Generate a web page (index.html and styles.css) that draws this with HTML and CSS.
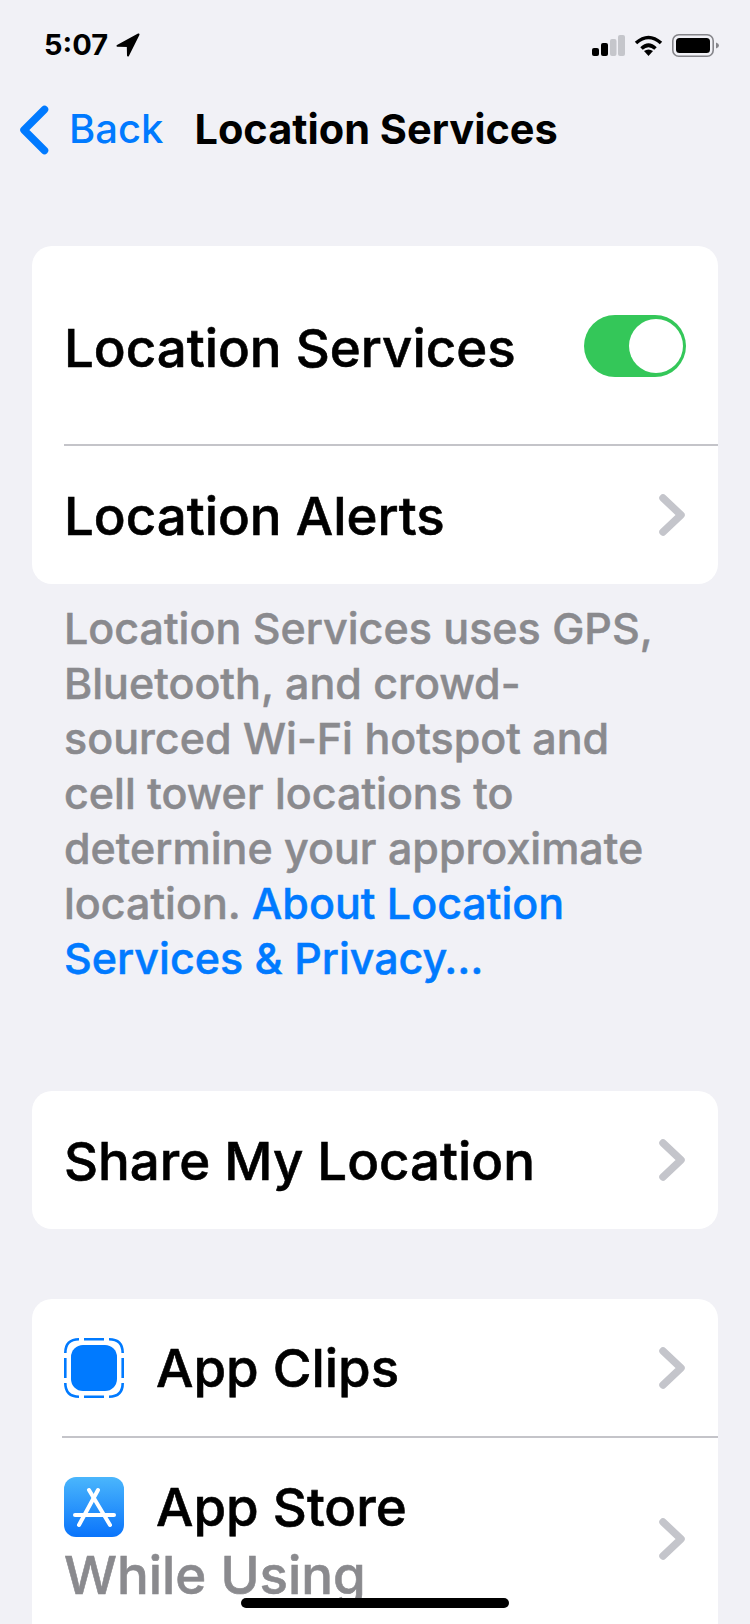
FILE: index.html
```html
<!DOCTYPE html>
<html lang="en">
<head>
  <meta charset="UTF-8" />
  <meta name="viewport" content="width=device-width, initial-scale=1.0" />
  <title>Location Services</title>
  <link rel="stylesheet" href="styles.css">
</head>
<body>
  <div class="screen">
    <div class="status-bar">
      <div class="status-left">
        <span class="time">5:07</span>
        <svg width="24" height="24" viewBox="0 0 24 24"><path d="M22.500 1.500 L1.500 12.800 L11.800 13 L12 22.500 Z" fill="#000" stroke="#000" stroke-width="2" stroke-linejoin="round"/></svg>
      </div>
      <div class="status-right">
        <svg width="33" height="21" viewBox="0 0 33 21">
          <rect x="0" y="13" width="7" height="8" rx="2" fill="#000"/>
          <rect x="9" y="8" width="7" height="13" rx="2" fill="#000"/>
          <rect x="18" y="4" width="6.500" height="17" rx="2" fill="#c5c6cb"/>
          <rect x="26" y="0" width="7" height="21" rx="2" fill="#c5c6cb"/>
        </svg>
        <svg width="29" height="21" viewBox="0 0 29 21" fill="none" stroke="#000" stroke-width="3.600">
          <path d="M2 8 Q14.500 -3 27 8"/>
          <path d="M7.500 13.500 Q14.500 7 21.500 13.500"/>
          <path d="M14.500 21 L10 16 Q14.500 13 19 16 Z" fill="#000" stroke="none"/>
        </svg>
        <svg width="48" height="23" viewBox="0 0 48 23">
          <rect x="0.800" y="0.800" width="40.400" height="21.400" rx="6" fill="none" stroke="#85858a" stroke-width="1.600"/>
          <rect x="4" y="4" width="34" height="15" rx="3.500" fill="#000"/>
          <path d="M44 8.500 Q47 9.500 47 11.500 Q47 13.500 44 14.500 Z" fill="#85858a"/>
        </svg>
      </div>
    </div>

    <div class="nav-bar">
      <svg width="32" height="50" viewBox="0 0 32 50"><path d="M26.500 4.500 L6 25 L26.500 45.500" fill="none" stroke="#007aff" stroke-width="7.500" stroke-linecap="round" stroke-linejoin="round"/></svg>
      <span class="back-label">Back</span>
      <span class="nav-title">Location Services</span>
    </div>

    <div class="card first-card">
      <div class="row row-toggle">
        <span class="row-label">Location Services</span>
        <div class="toggle"><div class="knob"></div></div>
      </div>
      <div class="divider"></div>
      <div class="row row-short">
        <span class="row-label">Location Alerts</span>
        <svg class="chevron" width="27" height="42" viewBox="0 0 27 42"><path d="M4 4 L22 21 L4 38" fill="none" stroke="#c4c5cb" stroke-width="7.500" stroke-linecap="round" stroke-linejoin="round"/></svg>
      </div>
    </div>

    <p class="footnote">Location Services uses GPS, Bluetooth, and crowd-sourced Wi-Fi hotspot and cell tower locations to determine your approximate location. <a class="link">About Location Services &amp; Privacy…</a></p>

    <div class="card share-card">
      <div class="row row-short">
        <span class="row-label">Share My Location</span>
        <svg class="chevron" width="27" height="42" viewBox="0 0 27 42"><path d="M4 4 L22 21 L4 38" fill="none" stroke="#c4c5cb" stroke-width="7.500" stroke-linecap="round" stroke-linejoin="round"/></svg>
      </div>
    </div>

    <div class="card apps-card">
      <div class="row app-row clips-row">
        <svg width="60" height="60" viewBox="0 0 60 60">
          <rect x="7" y="7" width="46" height="46" rx="12" fill="#007aff"/>
          <g fill="none" stroke="#007aff" stroke-width="2.600">
            <path d="M1.300 15 Q1.300 1.300 15 1.300"/>
            <path d="M20 1.300 H40"/>
            <path d="M45 1.300 Q58.700 1.300 58.700 15"/>
            <path d="M58.700 20 V40"/>
            <path d="M58.700 45 Q58.700 58.700 45 58.700"/>
            <path d="M40 58.700 H20"/>
            <path d="M15 58.700 Q1.300 58.700 1.300 45"/>
            <path d="M1.300 40 V20"/>
          </g>
        </svg>
        <span class="row-label">App Clips</span>
        <svg class="chevron" width="27" height="42" viewBox="0 0 27 42"><path d="M4 4 L22 21 L4 38" fill="none" stroke="#c4c5cb" stroke-width="7.500" stroke-linecap="round" stroke-linejoin="round"/></svg>
      </div>
      <div class="divider apps-divider"></div>
      <div class="row app-row store-row">
        <svg width="60" height="60" viewBox="0 0 60 60">
          <defs><linearGradient id="store" x1="0" y1="0" x2="0" y2="1"><stop offset="0" stop-color="#4ab6fc"/><stop offset="1" stop-color="#0a74fb"/></linearGradient></defs>
          <rect width="60" height="60" rx="12" fill="url(#store)"/>
          <g stroke="#fff" stroke-width="4" stroke-linecap="round" fill="none">
            <path d="M34 13 L15 48"/>
            <path d="M25 13 L46 48"/>
            <path d="M11 38 H50"/>
          </g>
        </svg>
        <div class="store-text">
          <span class="row-label">App Store</span>
          <span class="row-value">While Using</span>
        </div>
        <svg class="chevron" width="27" height="42" viewBox="0 0 27 42"><path d="M4 4 L22 21 L4 38" fill="none" stroke="#c4c5cb" stroke-width="7.500" stroke-linecap="round" stroke-linejoin="round"/></svg>
      </div>
    </div>

    <div class="home-indicator"></div>
  </div>
</body>
</html>
```

FILE: styles.css
```css
body {
  margin: 0;
  background: #f1f1f6;
  font-family: Inter, "Liberation Sans", sans-serif;
  color: #000;
}

.screen {
  position: relative;
  width: 750px;
  height: 1624px;
  overflow: hidden;
}

.status-bar {
  display: flex;
  justify-content: space-between;
  align-items: center;
  height: 24px;
  padding: 33px 30px 0 44px;
}
.status-left {
  display: flex;
  align-items: center;
  gap: 8px;
}
.time {
  font-size: 29px;
  font-weight: 700;
  line-height: 24px;
}
.status-right {
  display: flex;
  align-items: center;
  gap: 9px;
}

.nav-bar {
  display: flex;
  align-items: center;
  height: 70px;
  margin-top: 38px;
  padding-left: 18px;
}
.back-label {
  color: #007aff;
  font-size: 40px;
  font-weight: 500;
  margin: 0 0 3px 19px;
}
.nav-title {
  font-size: 41.500px;
  font-weight: 700;
  margin: 0 0 2px 31px;
}

.card {
  margin: 0 32px;
  background: #fff;
  border-radius: 20px;
  overflow: hidden;
}
.first-card {
  margin-top: 81px;
}

.row {
  display: flex;
  align-items: center;
  justify-content: space-between;
  padding: 0 32px 0 32px;
}
.row-label {
  font-size: 52.800px;
  font-weight: 500;
  -webkit-text-stroke: 0.6px currentColor;
  white-space: nowrap;
}
.row-toggle {
  height: 198px;
}
.row-toggle .row-label {
  margin-top: 6px;
}
.row-short {
  height: 138px;
}
.row-short .row-label {
  margin-top: 2px;
}

.divider {
  height: 2px;
  margin-left: 32px;
  background: #c4c4c9;
}

.toggle {
  display: flex;
  justify-content: flex-end;
  align-items: center;
  width: 102px;
  height: 62px;
  margin-top: 2px;
  padding-right: 3px;
  box-sizing: border-box;
  background: #34c759;
  border-radius: 31px;
}
.knob {
  width: 54px;
  height: 54px;
  background: #fff;
  border-radius: 50%;
}

.footnote {
  margin: 17px 85px 0 64px;
  font-size: 43px;
  line-height: 55px;
  font-weight: 500;
  -webkit-text-stroke: 0.5px currentColor;
  color: #8a8a8e;
}
.link {
  color: #007aff;
}

.share-card {
  margin-top: 105px;
}
.apps-card {
  margin-top: 70px;
  height: 400px;
}

.app-row {
  justify-content: flex-start;
}
.app-row .row-label {
  margin-left: 32px;
}
.app-row .chevron {
  margin-left: auto;
}
.clips-row {
  height: 137px;
}
.store-row {
  height: 200px;
  align-items: flex-start;
  padding-top: 39px;
  box-sizing: border-box;
}
.store-row .chevron {
  margin-top: 41px;
}
.apps-divider {
  margin-left: 30px;
}

.store-text {
  display: flex;
  flex-direction: column;
  margin-top: -2px;
}
.row-value {
  margin-left: -60px;
  font-size: 52.800px;
  line-height: 72px;
  font-weight: 500;
  -webkit-text-stroke: 0.6px currentColor;
  white-space: nowrap;
  color: #8a8a8e;
}

.home-indicator {
  position: absolute;
  left: 241px;
  bottom: 16px;
  width: 268px;
  height: 10px;
  background: #000;
  border-radius: 5px;
}
```
